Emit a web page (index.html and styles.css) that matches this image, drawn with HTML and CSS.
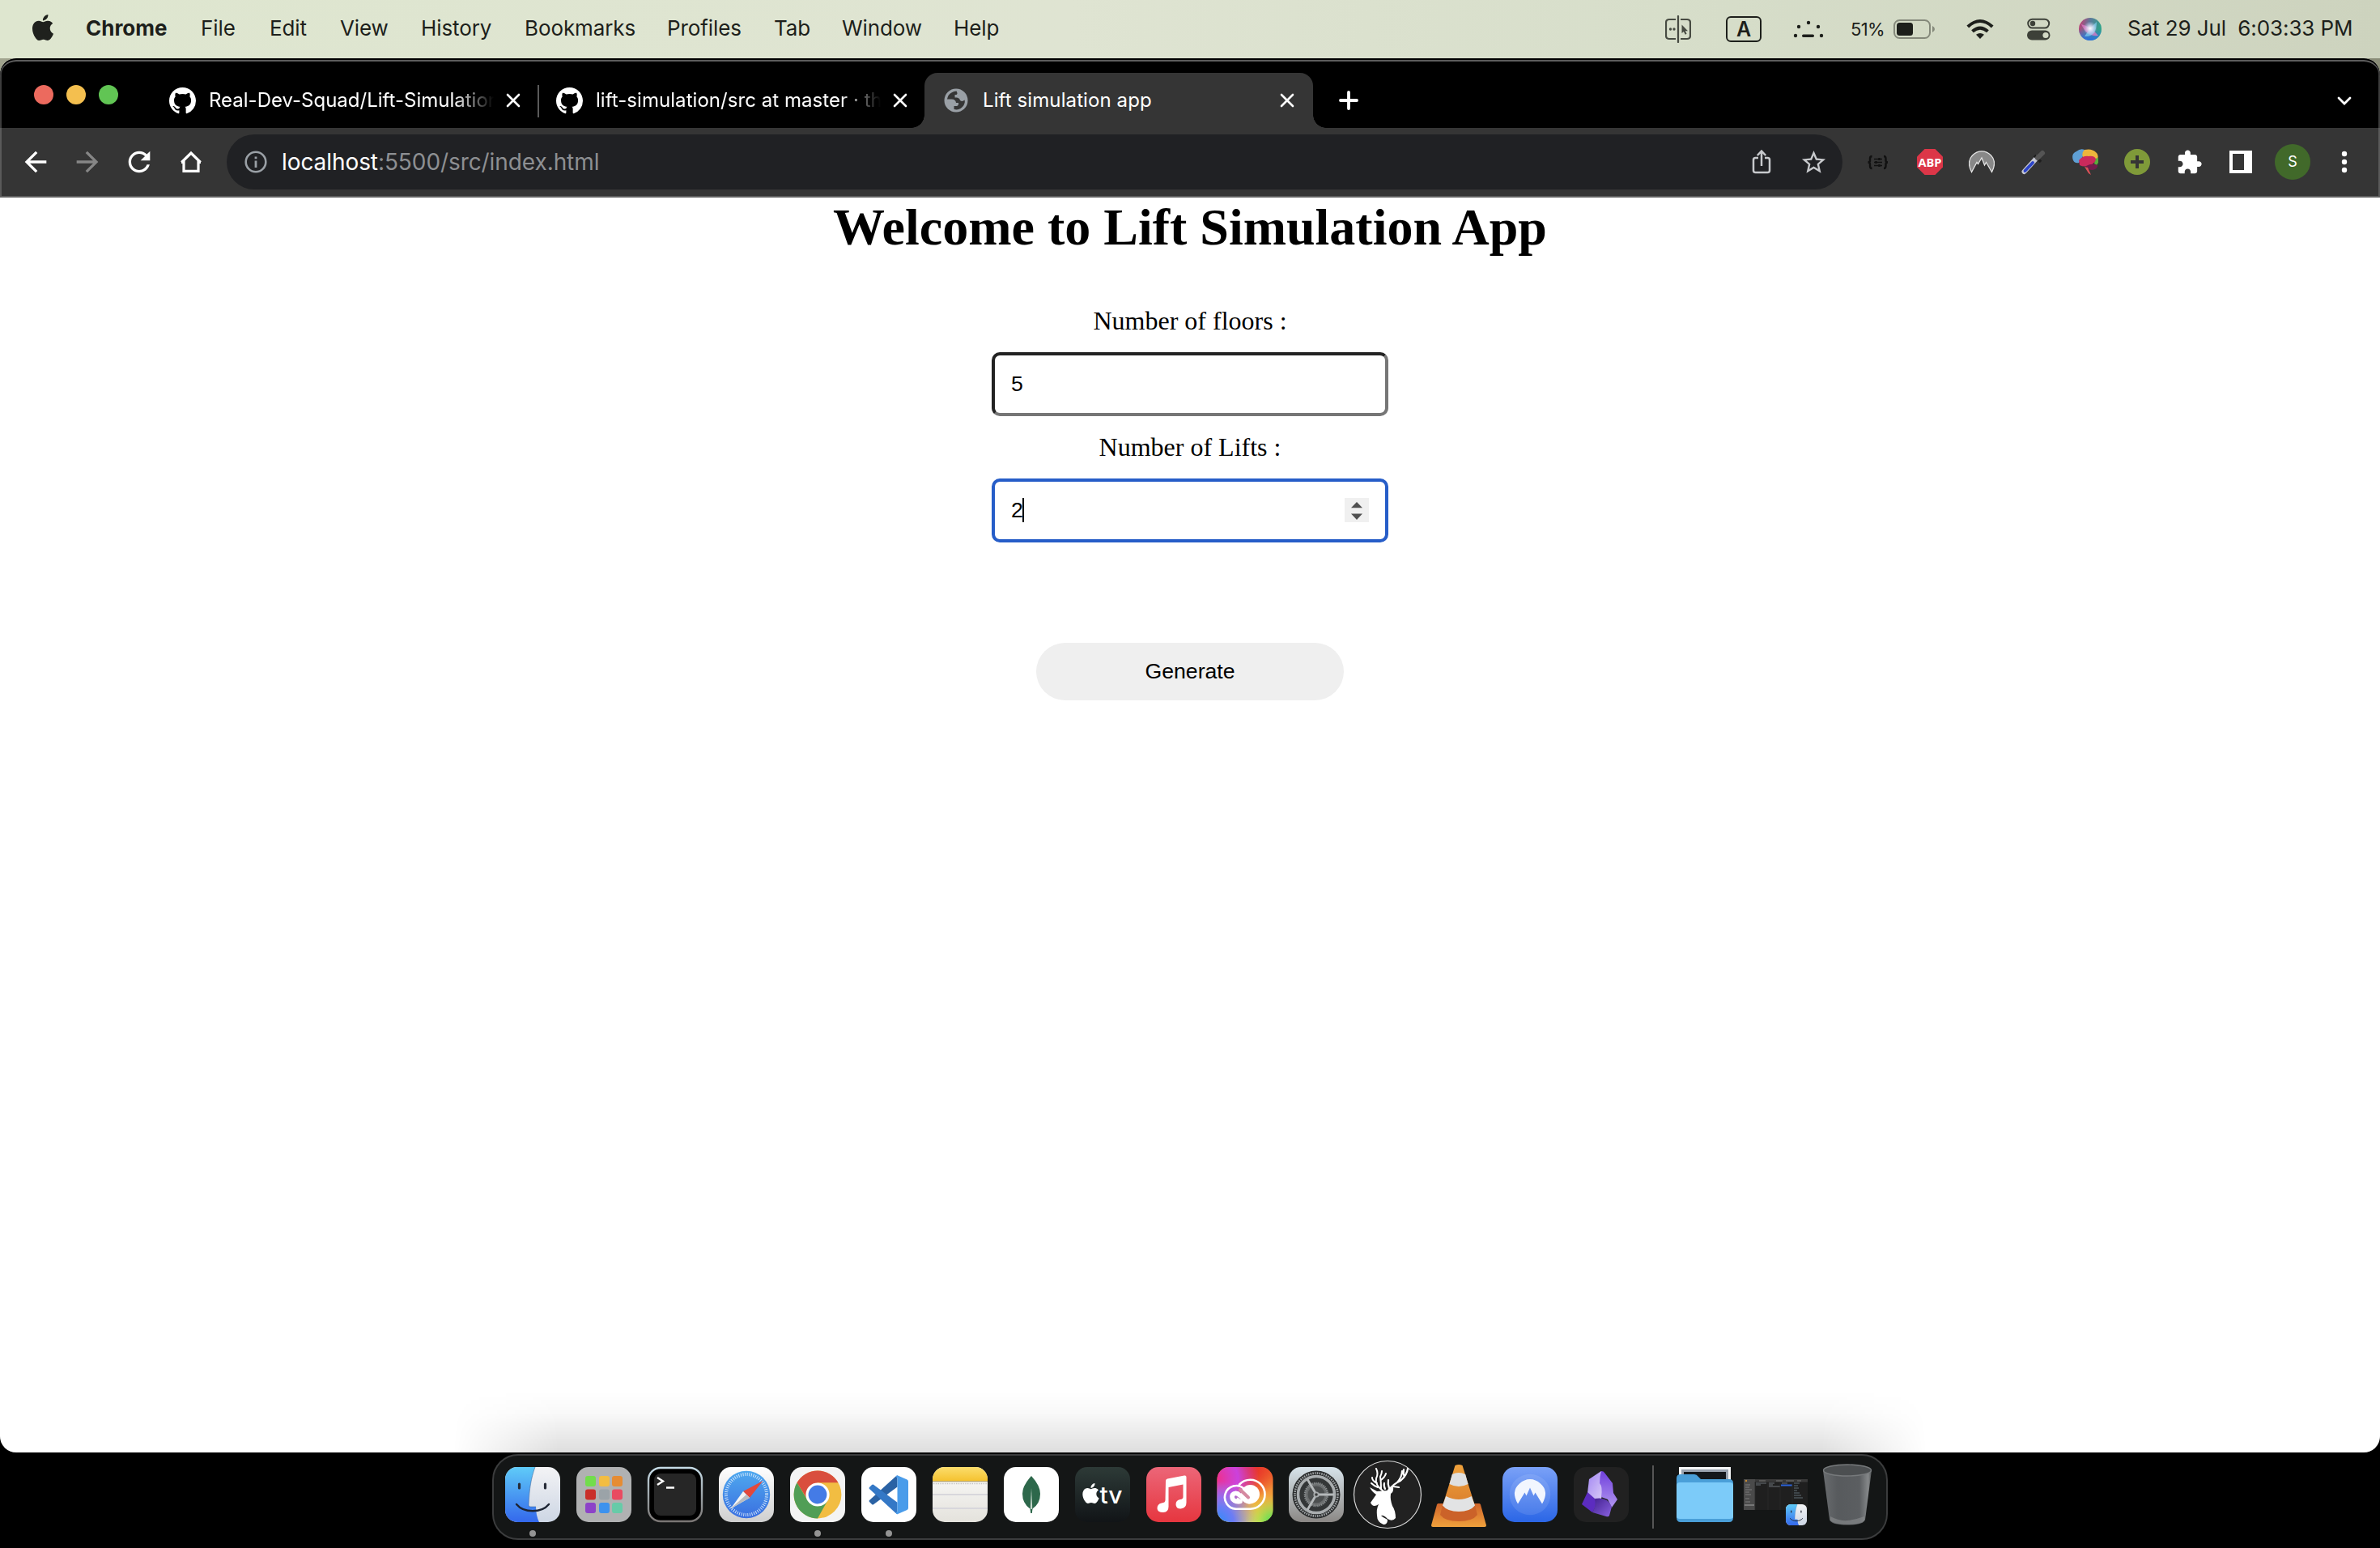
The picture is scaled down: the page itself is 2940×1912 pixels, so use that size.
FILE: index.html
```html
<!DOCTYPE html>
<html lang="en">
<head>
<meta charset="utf-8">
<title>Lift simulation app</title>
<link rel="stylesheet" href="styles.css">
</head>
<body>
<svg class="defs" width="0" height="0" aria-hidden="true">
  <defs>
    <linearGradient id="gBlue" x1="0" y1="0" x2="0" y2="1"><stop offset="0" stop-color="#5fcbf8"/><stop offset="1" stop-color="#3468ec"/></linearGradient>
    <linearGradient id="gFace" x1="0" y1="0" x2="0" y2="1"><stop offset="0" stop-color="#f3f3f5"/><stop offset="1" stop-color="#cdd6e4"/></linearGradient>
    <linearGradient id="gSilver" x1="0" y1="0" x2="0" y2="1"><stop offset="0" stop-color="#fff"/><stop offset="1" stop-color="#cfcfcf"/></linearGradient>
    <linearGradient id="gSafari" x1="0" y1="0" x2="0" y2="1"><stop offset="0" stop-color="#4fa9ef"/><stop offset="1" stop-color="#3a6fe0"/></linearGradient>
    <linearGradient id="gTerm" x1="0" y1="0" x2="0" y2="1"><stop offset="0" stop-color="#c5dbe6"/><stop offset="1" stop-color="#7a7674"/></linearGradient>
    <linearGradient id="gNoteTop" x1="0" y1="0" x2="0" y2="1"><stop offset="0" stop-color="#fbdd6c"/><stop offset="1" stop-color="#f5c331"/></linearGradient>
    <linearGradient id="gNote" x1="0" y1="0" x2="0" y2="1"><stop offset="0" stop-color="#fbfbfa"/><stop offset="1" stop-color="#e4e2dc"/></linearGradient>
    <linearGradient id="gTv" x1="0" y1="0" x2="0" y2="1"><stop offset="0" stop-color="#2d3a37"/><stop offset="1" stop-color="#111417"/></linearGradient>
    <linearGradient id="gMusic" x1="0" y1="0" x2="0" y2="1"><stop offset="0" stop-color="#ec6678"/><stop offset="1" stop-color="#e6363f"/></linearGradient>
    <linearGradient id="gGear" x1="0" y1="0" x2="0" y2="1"><stop offset="0" stop-color="#d7e3ea"/><stop offset="1" stop-color="#8b8885"/></linearGradient>
    <linearGradient id="gNord" x1="0" y1="0" x2="0" y2="1"><stop offset="0" stop-color="#7aa1f7"/><stop offset="1" stop-color="#2b66e6"/></linearGradient>
    <linearGradient id="gCone" x1="0" y1="0" x2="0" y2="1"><stop offset="0" stop-color="#efa13b"/><stop offset="1" stop-color="#d77a2c"/></linearGradient>
    <linearGradient id="gBase" x1="0" y1="0" x2="0" y2="1"><stop offset="0" stop-color="#d0642a"/><stop offset="1" stop-color="#efa13c"/></linearGradient>
    <linearGradient id="gTrash" x1="0" y1="0" x2="1" y2="0"><stop offset="0" stop-color="#6d7073"/><stop offset=".3" stop-color="#5b5e61"/><stop offset=".75" stop-color="#5f6265"/><stop offset=".93" stop-color="#8b8e90"/><stop offset="1" stop-color="#55585a"/></linearGradient>
    <linearGradient id="gObs1" x1="0" y1="0" x2="1" y2="1"><stop offset="0" stop-color="#a184f2"/><stop offset="1" stop-color="#dccff8"/></linearGradient>
    <linearGradient id="gObs2" x1="0" y1="0" x2="0" y2="1"><stop offset="0" stop-color="#7040dc"/><stop offset="1" stop-color="#b196f0"/></linearGradient>
    <linearGradient id="gObs3" x1="0" y1="0" x2="1" y2="1"><stop offset="0" stop-color="#42208f"/><stop offset="1" stop-color="#8a62e0"/></linearGradient>
    <radialGradient id="gCcR" cx=".5" cy="0" r=".62"><stop offset="0" stop-color="#e62c20"/><stop offset=".35" stop-color="#e8362a"/><stop offset="1" stop-color="#e8362a" stop-opacity="0"/></radialGradient>
    <radialGradient id="gCcM" cx="0" cy=".2" r=".75"><stop offset="0" stop-color="#ee2f8c"/><stop offset=".5" stop-color="#c843f0" stop-opacity=".9"/><stop offset="1" stop-color="#c843f0" stop-opacity="0"/></radialGradient>
    <radialGradient id="gCcB" cx="0" cy="1" r=".75"><stop offset="0" stop-color="#2f8cf8"/><stop offset=".4" stop-color="#6d7cf5"/><stop offset="1" stop-color="#8b7cf5" stop-opacity="0"/></radialGradient>
    <radialGradient id="gCcG" cx="1" cy="1" r=".5"><stop offset="0" stop-color="#3ade58"/><stop offset="1" stop-color="#b8e050" stop-opacity="0"/></radialGradient>
    <linearGradient id="gCcY" x1="0" y1="0" x2="0" y2="1"><stop offset="0" stop-color="#ee5a28"/><stop offset="1" stop-color="#f6e04c"/></linearGradient>
    <radialGradient id="gSiri" cx=".5" cy=".5" r=".5"><stop offset="0" stop-color="#fff"/><stop offset=".4" stop-color="#e6e4f6" stop-opacity=".75"/><stop offset="1" stop-color="#cce" stop-opacity="0"/></radialGradient>
    <linearGradient id="gSiriRing" x1="0" y1="0" x2="1" y2=".3"><stop offset="0" stop-color="#d6336c"/><stop offset=".5" stop-color="#5a7a9a"/><stop offset="1" stop-color="#2fa38a"/></linearGradient>
    <linearGradient id="gSiriBlue" x1="0" y1="0" x2="0" y2="1"><stop offset=".5" stop-color="#2a7ae0" stop-opacity="0"/><stop offset="1" stop-color="#2a6fe0"/></linearGradient>
    <symbol id="apple" viewBox="0 0 24 24"><path d="M12.152 6.896c-.948 0-2.415-1.078-3.96-1.04-2.04.027-3.91 1.183-4.961 3.014-2.117 3.675-.546 9.103 1.519 12.09 1.013 1.454 2.208 3.09 3.792 3.039 1.52-.065 2.09-.987 3.935-.987 1.831 0 2.35.987 3.96.948 1.637-.026 2.676-1.48 3.676-2.948 1.156-1.688 1.636-3.325 1.662-3.415-.039-.013-3.182-1.221-3.22-4.857-.026-3.04 2.48-4.494 2.597-4.559-1.429-2.09-3.623-2.324-4.39-2.376-2-.156-3.675 1.09-4.61 1.09zM15.53 3.83c.843-1.012 1.4-2.427 1.245-3.83-1.207.052-2.662.805-3.532 1.818-.78.896-1.454 2.338-1.273 3.714 1.338.104 2.715-.688 3.559-1.701"/></symbol>
    <symbol id="github" viewBox="0 0 16 16"><path d="M8 0C3.58 0 0 3.58 0 8c0 3.54 2.29 6.53 5.47 7.59.4.07.55-.17.55-.38 0-.19-.01-.82-.01-1.49-2.01.37-2.53-.49-2.69-.94-.09-.23-.48-.94-.82-1.13-.28-.15-.68-.52-.01-.53.63-.01 1.08.58 1.23.82.72 1.21 1.87.87 2.33.66.07-.52.28-.87.51-1.07-1.78-.2-3.64-.89-3.64-3.95 0-.87.31-1.59.82-2.15-.08-.2-.36-1.02.08-2.12 0 0 .67-.21 2.2.82.64-.18 1.32-.27 2-.27s1.36.09 2 .27c1.53-1.04 2.2-.82 2.2-.82.44 1.1.16 1.92.08 2.12.51.56.82 1.27.82 2.15 0 3.07-1.87 3.75-3.65 3.95.29.25.54.73.54 1.48 0 1.07-.01 1.93-.01 2.2 0 .21.15.46.55.38A8.01 8.01 0 0 0 16 8c0-4.42-3.58-8-8-8z"/></symbol>
    <symbol id="close" viewBox="0 0 18 18"><path d="M2 2l14 14M16 2L2 16" stroke="#fff" stroke-width="2.6" stroke-linecap="round"/></symbol>
    <symbol id="finder" viewBox="-34 -34 68 68">
      <rect x="-34" y="-34" width="68" height="68" rx="15" fill="url(#gFace)"/>
      <path d="M3-34C-2-20-4-8-5 13Q-5 15-3 15H4Q4 26 8 34H-19A15 15 0 0 1-34 19V-19A15 15 0 0 1-19-34Z" fill="url(#gBlue)"/>
      <path d="M-16.500-13v5M15.500-13v5" stroke="#262b38" stroke-width="3.200" stroke-linecap="round"/>
      <path d="M3-34C-2-20-4-8-5 13Q-5 15-3 15H4" fill="none" stroke="#2a4f86" stroke-opacity=".45" stroke-width="1"/>
      <path d="M-20 12C-11 23 11 23 20 12" fill="none" stroke="#1d2433" stroke-width="2.400" stroke-linecap="round"/>
    </symbol>
  </defs>
</svg>

<header class="menubar">
  <nav class="menus">
    <svg class="apple-logo" width="32" height="32" fill="#1f211d"><use href="#apple"/></svg>
    <span class="app-name">Chrome</span><span>File</span><span>Edit</span><span>View</span><span>History</span><span>Bookmarks</span><span>Profiles</span><span>Tab</span><span>Window</span><span>Help</span>
  </nav>
  <div class="status">
    <svg width="32" height="34" viewBox="0 0 32 34" fill="none" stroke="#474b42" stroke-width="2.2"><path d="M13 5H5Q1 5 1 9V25Q1 29 5 29H13M19 5H27Q31 5 31 9V25Q31 29 27 29H19"/><path d="M16 1V33" stroke-linecap="round"/><circle cx="6.500" cy="17" r="1.700" fill="#474b42" stroke="none"/><circle cx="11" cy="17" r="1.700" fill="#474b42" stroke="none"/><path d="M20.500 11.500v10.500l2.400-2 1.900 3.700 1.800-.9-1.800-3.500h3.200z" fill="#474b42" stroke="none"/></svg>
    <span class="input-source">A</span>
    <svg width="38" height="24" viewBox="0 0 38 24" fill="#1d1f1b"><circle cx="19" cy="4" r="2.200"/><circle cx="7" cy="9" r="2.200"/><circle cx="31" cy="9" r="2.200"/><circle cx="3" cy="20" r="2.200"/><circle cx="35" cy="20" r="2.200"/><rect x="11" y="18.500" width="15" height="3.400" rx="1.700"/></svg>
    <span class="percent">51%</span>
    <svg width="52" height="24" viewBox="0 0 52 24"><rect x="1" y="1" width="44" height="22" rx="6.500" fill="none" stroke="#85897b" stroke-width="2"/><rect x="4" y="4" width="20" height="16" rx="3.500" fill="#1d1f1b"/><path d="M48 8Q51 9.500 51 12T48 16Z" fill="#85897b"/></svg>
    <svg width="34" height="26" viewBox="0 0 34 26" fill="none" stroke="#1d1f1b" stroke-width="4"><path d="M1.800 10Q17-4 32.200 10"/><path d="M7.500 15.800Q17 7.500 26.500 15.800"/><path d="M17 25l-5-5.200Q17 16 22 19.800Z" fill="#1d1f1b" stroke="none"/></svg>
    <svg width="29" height="28" viewBox="0 0 29 28"><rect x="1.200" y="1.700" width="26" height="10.800" rx="5.400" fill="none" stroke="#3d4038" stroke-width="2"/><circle cx="7" cy="7" r="3.200" fill="#3d4038"/><rect x="0" y="15.500" width="28.500" height="12" rx="6" fill="#3d4038"/><circle cx="23" cy="21.500" r="3.600" fill="#d4dac6"/></svg>
    <svg width="28" height="28" viewBox="0 0 28 28"><circle cx="14" cy="14" r="14" fill="url(#gSiriRing)"/><circle cx="14" cy="14" r="14" fill="url(#gSiriBlue)"/><path d="M3 8Q14 10 24 22Q10 24 3 8Z" fill="#e478c8" opacity=".75"/><path d="M22 5Q14 12 7 23Q22 24 22 5Z" fill="#7fd0f4" opacity=".7"/><circle cx="14" cy="13" r="8.500" fill="url(#gSiri)"/></svg>
    <span class="clock">Sat 29 Jul&nbsp; 6:03:33 PM</span>
  </div>
</header>

<main class="window">
  <div class="tabstrip">
    <div class="lights"><i class="red"></i><i class="yellow"></i><i class="green"></i></div>
    <div class="tab">
      <svg class="favicon" width="33" height="33" fill="#fff"><use href="#github"/></svg>
      <span class="title fade t1">Real-Dev-Squad/Lift-Simulation</span>
      <svg width="18" height="18"><use href="#close"/></svg>
    </div>
    <div class="tab second">
      <svg class="favicon" width="33" height="33" fill="#fff"><use href="#github"/></svg>
      <span class="title fade t2">lift-simulation/src at master · the</span>
      <svg width="18" height="18"><use href="#close"/></svg>
    </div>
    <div class="tab active">
      <svg class="favicon" width="30" height="30" viewBox="0 0 30 30"><circle cx="15" cy="15" r="14.500" fill="#9aa0a6"/><path d="M15.500 3.500Q9 4 5.500 9Q4.500 11 4 13.500H9.500Q14.500 13.500 15 18H18Q18.500 21 16 22H12.500V26Q20 28 24.500 21Q26.500 17 25.500 14.500Q23 17 20 15Q19.500 12 16 11.500H13.500V8H15.500Q17.500 7 15.500 3.500Z" fill="#353535"/></svg>
      <span class="title t3">Lift simulation app</span>
      <svg width="18" height="18"><use href="#close"/></svg>
    </div>
    <svg class="newtab" width="24" height="24" viewBox="0 0 24 24"><path d="M12 2V22M2 12H22" stroke="#fff" stroke-width="3.800" stroke-linecap="round"/></svg>
    <svg class="tabsearch" width="20" height="14" viewBox="0 0 20 14"><path d="M3 3l7 7 7-7" fill="none" stroke="#fff" stroke-width="2.800" stroke-linecap="round"/></svg>
  </div>

  <div class="toolbar">
    <div class="cells">
      <svg width="40" height="40" viewBox="0 0 24 24" fill="#fff"><path d="M20 11H7.830l5.590-5.590L12 4l-8 8 8 8 1.410-1.410L7.830 13H20v-2z"/></svg>
      <svg width="40" height="40" viewBox="0 0 24 24" fill="#868686"><path d="M4 11h12.170l-5.590-5.590L12 4l8 8-8 8-1.410-1.410L16.170 13H4v-2z"/></svg>
      <svg width="40" height="40" viewBox="0 0 24 24" fill="#fff"><path d="M17.650 6.350C16.200 4.900 14.210 4 12 4c-4.420 0-7.990 3.580-7.990 8s3.570 8 7.990 8c3.730 0 6.840-2.550 7.730-6h-2.080c-.82 2.330-3.040 4-5.650 4-3.310 0-6-2.690-6-6s2.690-6 6-6c1.660 0 3.140.69 4.220 1.780L13 11h7V4l-2.350 2.350z"/></svg>
      <svg width="40" height="40" viewBox="0 0 40 40" fill="none" stroke="#fff" stroke-width="3.200"><path d="M8.300 20.500L20 9l11.700 11.500M11 18.500V31.400H29V18.500M8 20.400H12M28 20.400H32"/></svg>
    </div>
    <div class="omnibox">
      <svg width="28" height="28" viewBox="0 0 28 28" fill="none" stroke="#9aa0a6"><circle cx="14" cy="14" r="12.300" stroke-width="2.600"/><path d="M14 12.500V21M14 7.500V10.300" stroke-width="2.800"/></svg>
      <span class="url"><b>localhost</b><span class="path">:5500/src/index.html</span></span>
      <svg width="24" height="32" viewBox="0 0 24 32" fill="none" stroke="#c7c9cc" stroke-width="2.500"><path d="M8 11H4.500Q2 11 2 13.500V26.500Q2 29 4.500 29H19.500Q22 29 22 26.500V13.500Q22 11 19.500 11H16"/><path d="M12 21V3M6.800 8L12 2.600 17.200 8"/></svg>
      <svg class="star" width="35" height="35" viewBox="0 0 24 24" fill="#c7c9cc"><path d="M22 9.240l-7.190-.62L12 2 9.190 8.630 2 9.240l5.460 4.730L5.820 21 12 17.270 18.180 21l-1.630-7.030L22 9.240zM12 15.400l-3.760 2.270 1-4.280-3.320-2.880 4.380-.38L12 6.100l1.710 4.040 4.380.38-3.320 2.880 1 4.280L12 15.400z"/></svg>
    </div>
    <div class="cells">
      <svg width="32" height="32" viewBox="0 0 32 32" fill="none" stroke="#111" stroke-width="2.400"><path d="M8.500 9Q6 9 6 12V14.500Q6 16.500 3.500 16.500Q6 16.500 6 18.500V21Q6 24 8.500 24M23 9Q25.500 9 25.500 12V14.500Q25.500 16.500 28 16.500Q25.500 16.500 25.500 18.500V21Q25.500 24 23 24"/><path d="M11 12.500H21M11 16.500H21M11 20.500H21" stroke-width="1.500"/><path d="M17.500 11v3M13.500 15v3M17.500 19v3"/></svg>
      <svg width="32" height="32" viewBox="0 0 32 32"><path d="M9.500 0h13L32 9.500v13L22.500 32h-13L0 22.500v-13z" fill="#dc3648"/><text x="16" y="21.800" text-anchor="middle" textLength="29" lengthAdjust="spacingAndGlyphs" class="abp">ABP</text></svg>
      <svg width="32" height="32" viewBox="0 0 32 32"><path d="M3.500 28.500Q-3 16 4.500 8Q9.500 2.800 16 2.800T27.500 8Q35 16 28.500 28.500L21.500 16.500 19.500 20 16 11 11.500 18.500 10 16.500Z" fill="#888" stroke="#e4e4e4" stroke-width="1.300"/></svg>
      <svg width="32" height="32" viewBox="0 0 32 32"><path d="M4.500 28L20 11" stroke="#c4c6d2" stroke-width="6" stroke-linecap="round"/><path d="M5.500 27L15 17" stroke="#2b43c8" stroke-width="3.800" stroke-linecap="round"/><path d="M17 8l8 8" stroke="#1e1e1e" stroke-width="3.500"/><path d="M21 11l6-6" stroke="#555" stroke-width="6" stroke-linecap="round"/></svg>
      <svg width="32" height="32" viewBox="0 0 32 32"><path d="M1 14Q-2 6 5 3Q10-1 15 1L13 9 8 17Q3 18 1 14Z" fill="#5f9fd4"/><path d="M15 1Q24-1 29 4Q33 7 31 12L27 14 13 10Q11 5 15 1Z" fill="#edb53c"/><path d="M28 12L32 11Q33 17 30 20L27 18Z" fill="#5aab3c"/><path d="M8 14Q13 8 20 9Q28 8 29 13Q27 19 21 20Q15 23 9 20Z" fill="#cb2a5c"/><path d="M17 21Q24 17 31 20Q32 24 25 26Q18 26 17 21Z" fill="#741a4c"/><path d="M15 22L19 23 23 32 20 30Z" fill="#dc5058"/></svg>
      <svg width="32" height="32" viewBox="0 0 32 32"><circle cx="16" cy="16" r="16" fill="#7f9a39"/><path d="M16 8V24M8 16H24" stroke="#353535" stroke-width="4"/></svg>
      <svg width="33" height="33" viewBox="0 0 24 24" fill="#fff"><path d="M20.500 11H19V7c0-1.100-.9-2-2-2h-4V3.500C13 2.120 11.880 1 10.500 1S8 2.120 8 3.500V5H4c-1.100 0-1.990.9-1.990 2v3.800H3.500c1.490 0 2.700 1.210 2.700 2.700s-1.210 2.700-2.700 2.700H2V20c0 1.100.9 2 2 2h3.800v-1.500c0-1.490 1.210-2.700 2.700-2.700 1.490 0 2.700 1.210 2.700 2.700V22H17c1.100 0 2-.9 2-2v-4h1.500c1.380 0 2.500-1.120 2.500-2.500S21.880 11 20.500 11z"/></svg>
      <svg width="28" height="28" viewBox="0 0 28 28"><path d="M0 0H28V28H0ZM4 4V24H18V4Z" fill="#fff" fill-rule="evenodd"/></svg>
      <span class="avatar">S</span>
      <svg width="8" height="28" viewBox="0 0 8 28" fill="#fff"><circle cx="4" cy="4" r="3.200"/><circle cx="4" cy="14" r="3.200"/><circle cx="4" cy="24" r="3.200"/></svg>
    </div>
  </div>

  <section class="page">
    <h1>Welcome to Lift Simulation App</h1>
    <label class="label">Number of floors :</label>
    <div class="field">5</div>
    <label class="label">Number of Lifts :</label>
    <div class="field focused"><span class="value">2</span><span class="caret"></span>
      <svg class="spinner" width="30" height="30" viewBox="0 0 30 30"><rect width="30" height="30" fill="#f0f0f0"/><path d="M8 12.200L15 5 22 12.200ZM8 19.500H22L15 27Z" fill="#505050"/></svg>
    </div>
    <button class="generate">Generate</button>
  </section>
</main>

<footer class="dock">
  <div class="app"><svg viewBox="-44 -44 88 88"><use href="#finder" x="-34" y="-34" width="68" height="68"/></svg><i class="dot"></i></div>
  <div class="app"><svg viewBox="-44 -44 88 88"><rect x="-34" y="-34" width="68" height="68" rx="15" fill="#b0b1b2"/>
    <g><rect x="-23" y="-23" width="13" height="13" rx="3" fill="#72dd4c"/><rect x="-6" y="-23" width="13" height="13" rx="3" fill="#f3bd42"/><rect x="10" y="-23" width="13" height="13" rx="3" fill="#e68c34"/><rect x="-23" y="-6.500" width="13" height="13" rx="3" fill="#c9302a"/><rect x="-6" y="-6.500" width="13" height="13" rx="3" fill="#9ba3a8"/><rect x="10" y="-6.500" width="13" height="13" rx="3" fill="#e94b61"/><rect x="-23" y="10" width="13" height="13" rx="3" fill="#8c42c8"/><rect x="-6" y="10" width="13" height="13" rx="3" fill="#3d92ee"/><rect x="10" y="10" width="13" height="13" rx="3" fill="#67cba8"/></g></svg></div>
  <div class="app"><svg viewBox="-44 -44 88 88"><rect x="-33" y="-33" width="66" height="66" rx="15" fill="#000" stroke="url(#gTerm)" stroke-width="2.400"/><rect x="-26" y="-26" width="52" height="52" rx="8" fill="#262626"/><path d="M-22-21l7 4.500-7 4.500M-11-8.500h10" fill="none" stroke="#fff" stroke-width="2.400"/></svg></div>
  <div class="app"><svg viewBox="-44 -44 88 88"><rect x="-34" y="-34" width="68" height="68" rx="15" fill="url(#gSilver)"/><circle r="29.200" fill="url(#gSafari)"/><circle r="25" fill="none" stroke="#d9eafb" stroke-width="4" stroke-dasharray=".9 1.718"/><path d="M20.500-17L4 4-4-4Z" fill="#e3483c"/><path d="M-19.500 17.500L-4-4 4 4Z" fill="#f4f4f4"/><path d="M-19.500 17.500L0 0 4 4Z" fill="#b9bcc0"/></svg></div>
  <div class="app"><svg viewBox="-44 -44 88 88"><rect x="-34" y="-34" width="68" height="68" rx="15" fill="#f4f4f4"/><circle r="29.400" fill="#f2bd42"/><path d="M-25.460-14.700A29.400 29.400 0 0 1 25.460-14.700H0L-12 7Z" fill="#d94f3d"/><path d="M-25.460-14.700A29.400 29.400 0 0 0 0 29.400L12.500 7H-12.500Z" fill="#519e56"/><circle r="14.600" fill="#fff"/><circle r="11.400" fill="#447be6"/></svg><i class="dot"></i></div>
  <div class="app"><svg viewBox="-44 -44 88 88"><rect x="-34" y="-34" width="68" height="68" rx="15" fill="#fff"/><path d="M10.500-23.700V-9.500L-19 12.300Q-20 13-21 12L-24 9Q-25 8-24 7L8-22Z" fill="#2a62a4"/><path d="M10.500 24.300V9.800L-19-12.300Q-20-13-21-12L-24-9Q-25-8-24-7L8 22.600Z" fill="#3478c6"/><path d="M10.500-23.700L22.500-18.500Q24-17.700 24-16V16.500Q24 18.200 22.500 19L10.500 24.300Q9 24 8.500 22.500L10.500 21V-20.500L8.500-22Q9-23.500 10.500-23.700Z" fill="#4a9cea"/></svg><i class="dot"></i></div>
  <div class="app"><svg viewBox="-44 -44 88 88"><rect x="-34" y="-34" width="68" height="68" rx="15" fill="url(#gNote)"/><path d="M-34-17V-19A15 15 0 0 1-19-34H19A15 15 0 0 1 34-19V-17Z" fill="url(#gNoteTop)"/><path d="M-34-16.300H34" stroke="#b9a56a" stroke-width="1.200"/><path d="M-33-13.500H34" stroke="#c4c4c4" stroke-width="1.600" stroke-dasharray="1.400 1.400"/><path d="M-34 0H34M-34 17H34" stroke="#d8d7dc" stroke-width="1.800"/></svg></div>
  <div class="app"><svg viewBox="-44 -44 88 88"><rect x="-34" y="-34" width="68" height="68" rx="15" fill="#fff"/><path d="M0-23Q11-11 11-1Q11 11 1.500 17.500L.8 23H-.8L-1.500 17.500Q-11 11-11-1Q-11-11 0-23Z" fill="#2d684b"/><path d="M0-8L1.200 16 .8 18H-.8L-1.200 16Z" fill="#c5d6cb"/></svg></div>
  <div class="app"><svg viewBox="-44 -44 88 88"><rect x="-34" y="-34" width="68" height="68" rx="15" fill="url(#gTv)"/><use href="#apple" x="-27" y="-14" width="25" height="25" fill="#fff"/><text x="-3.500" y="10.500" class="tv" textLength="28" lengthAdjust="spacingAndGlyphs">tv</text></svg></div>
  <div class="app"><svg viewBox="-44 -44 88 88"><rect x="-34" y="-34" width="68" height="68" rx="15" fill="url(#gMusic)"/><path d="M-10-17Q-10-19-8-19.500L13-23.500Q15.500-24 15.500-21.500V10Q15.500 17 8.500 17.500Q2.500 17.500 2.500 12Q2.500 7 8 6Q11.500 5.500 11.500 3V-12.500L-6.500-9V15Q-6.500 21.500-13 22Q-20.500 22-20.500 17Q-20.500 11.500-15 10.500Q-10.500 10-10.500 7Z" fill="#fff"/></svg></div>
  <div class="app"><svg viewBox="-44 -44 88 88"><rect x="-34.500" y="-34" width="69" height="68" rx="15" fill="url(#gCcY)"/><rect x="-34.500" y="-34" width="69" height="68" rx="15" fill="url(#gCcR)"/><rect x="-34.500" y="-34" width="69" height="68" rx="15" fill="url(#gCcM)"/><rect x="-34.500" y="-34" width="69" height="68" rx="15" fill="url(#gCcB)"/><rect x="-34.500" y="-34" width="69" height="68" rx="15" fill="url(#gCcG)"/><circle cx="6.500" cy="-.5" r="11.500" fill="#fff"/><path d="M-6 8.500Q-12 9.500-15 6Q-17.500 1-13.500-1.200Q-10-2.500-6.500 1L1 7.500Q4 9.500 7 8.500" fill="none" stroke="#fff" stroke-width="5.600" stroke-linecap="round"/><path d="M-11 6L-7 9" stroke="#fff" stroke-width="6"/><path d="M-6-6L4 3.500" stroke="#d58aa0" stroke-width="4" stroke-linecap="round"/><path d="M-7-12.500Q-1.500-18.300 6.500-18.300A18 18 0 0 1 6.500 17.700H-10.500A14.300 14.300 0 1 1-1.500-7.500" fill="none" stroke="#fff" stroke-width="2.600" stroke-linecap="round"/></svg></div>
  <div class="app"><svg viewBox="-44 -44 88 88"><rect x="-34" y="-34" width="68" height="68" rx="15" fill="url(#gGear)"/><circle r="29.500" fill="#2b2d2e"/><circle r="26.500" fill="none" stroke="#a3a7a9" stroke-width="2.600" stroke-dasharray="1.500 1.275"/><circle r="22.500" fill="#333637" stroke="#a9adaf" stroke-width="3.600"/><circle r="14" fill="#6a6d6e" stroke="#85898b" stroke-width="2.600" stroke-dasharray="1.400 1"/><circle r="10.500" fill="#4c4f50"/><path d="M0 0H22M0 0L-11-19M0 0L-11 19" stroke="#b5b9bb" stroke-width="2.800"/><circle r="3.600" fill="#a7abad"/><circle r="1.800" fill="#3a3c3d"/></svg></div>
  <div class="app"><svg viewBox="-44 -44 88 88"><circle r="41.500" fill="#212121" stroke="#d8d8d8" stroke-width="1.200"/><g fill="none" stroke="#fff" stroke-linecap="round"><path d="M-5-4Q-16-12-14-20Q-11-26-14-32M-8-7Q-8-16-9-22Q-7-26-7-29M-13-14Q-19-17-19-21M-12-9Q-17-11-20-14M-8-18Q-3-22-2-26" stroke-width="2"/><path d="M0-4Q8-14 16-17Q24-24 25-32M12-15Q18-22 18-29M21-22Q19-26 20-31M2-8Q0-13 1-18M-3-7Q-5-11-4-14M7-10L14-9" stroke-width="2.200"/></g><path d="M-22-9L-13-4 0-5Q2-9 7-9Q8-4 4-1Q3 6 6 14Q10 20 10 29Q6 34 0 30Q-5 25-8 26Q-6 28 0 31Q0 37-5 37Q-13 34-13 26Q-14 18-11 12Q-18 17-21 10L-14 0Q-19-3-22-9Z" fill="#fff"/></svg></div>
  <div class="app"><svg viewBox="-44 -44 88 88"><path d="M-25.500 11H25.500Q26.500 11 27 12.500L34 38Q34 40 32 40H-32Q-34 40-34 38L-27 12.500Q-26.500 11-25.500 11Z" fill="url(#gBase)"/><path d="M-20 13H20L23 25Q17 33 0 33T-23 25Z" fill="#cb6229"/><path d="M-4.500-36Q0-38 4.500-36L20 13.500Q14 21 0 21T-20 13.500Z" fill="url(#gCone)"/><path d="M-8.200-25Q0-29 8.200-25L11.500-13Q6-10 0-10T-11.500-13Z" fill="#dfe0e1"/><path d="M-15.800 2Q-8 6 0 6T15.800 2L20 13.500Q14 21 0 21T-20 13.500Z" fill="#e2e3e4"/></svg></div>
  <div class="app"><svg viewBox="-44 -44 88 88"><rect x="-34" y="-34" width="68" height="68" rx="15" fill="url(#gNord)"/><circle r="25.300" fill="#fff" fill-opacity=".1"/><path d="M-15 11.500Q-24-4-13-13.500Q-7-19 0-19T13-13.500Q24-4 15 11.500L6.500-2.500 4.500 1.500 0-8.500-4.500 1.500-6.500-2.500Z" fill="#f2f6fe"/></svg></div>
  <div class="app"><svg viewBox="-44 -44 88 88"><rect x="-34" y="-34" width="68" height="68" rx="15" fill="#212121"/><path d="M0-29L-15-19-17-2-8 7 0 5Q6-12 0-29Z" fill="url(#gObs1)"/><path d="M0-29Q3-29 4-27L14-14 15-2 20 6 13 16 8 6 0 3Q2-10-2-14Q-2-22 0-29Z" fill="url(#gObs2)"/><path d="M-17-3L-24 12-11 22Q-4 12-8 5Z" fill="#5c2cc0"/><path d="M-8 5Q8 2 13 15L10 26Q9 28 6 27L-11 22Q-6 14-8 5Z" fill="url(#gObs3)"/></svg></div>
  <div class="divider"></div>
  <div class="app"><svg viewBox="-44 -44 88 88"><path d="M-32-34H32V0H-32Z" fill="#f4f5f6"/><path d="M-29-31H29V0H-29Z" fill="#9aa3af"/><path d="M-26-28H26V0H-26Z" fill="#14181c"/><path d="M-35-20Q-35-25-30-25H-13Q-10-25-8-22L-5-19H30Q35-19 35-14V28Q35 34 30 34H-30Q-35 34-35 28Z" fill="#4a9fd8"/><path d="M-35-11Q-35-15-31-15H31Q35-15 35-11V27Q35 30 31 30H-31Q-35 30-35 27Z" fill="#7ccbf9"/></svg></div>
  <div class="app"><svg viewBox="-44 -44 88 88"><path d="M-40-19H39V19H-40Z" fill="#1f1f1f"/><path d="M-40-19H-26V19H-40Z" fill="#4a4a4a"/><path d="M-26-19H39V-15.500H-26Z" fill="#3a3a3a"/><circle cx="-37" cy="-17" r="1.200" fill="#c58a35"/><g fill="none"><path d="M-38-12h6M-38-9h5M-38-6h8M-38-3h5M-38 0h7M-38 5h5M-38 9h6" stroke="#7d7d7d" stroke-width="1"/><path d="M-39 13H-27" stroke="#777" stroke-width="2"/><path d="M-25-14h13M-25-12h6M-9-14h7M-9-12h5M-9-10h14M7-14h7" stroke="#6c7378" stroke-width="1.200"/><path d="M6-11.500H20" stroke="#2c62d8" stroke-width="2"/><path d="M22-14h7M22-11h5M22-8h6M22-5h4M22-2h7M22 1h9M22 4h11" stroke="#5f6c75" stroke-width="1.200"/><path d="M-26-16V19M-10-16V19M5-16V19M20-16V19" stroke="#2b2b2b" stroke-width=".8"/><path d="M-21-17h8M0-17h8M12-17h10M26-17h5" stroke="#757575" stroke-width="1.200"/></g><use href="#finder" x="12" y="12" width="26" height="26"/></svg></div>
  <div class="app"><svg viewBox="-44 -44 88 88"><path d="M-30-30L-22 31Q-20 37.500 0 37.500T22 31L30-30Z" fill="url(#gTrash)" fill-opacity=".95"/><path d="M-21 27Q-10 33 0 32T21 27L21 32Q16 37 0 37T-21 32Z" fill="#8f9294" fill-opacity=".55"/><ellipse cy="-30" rx="29.500" ry="7" fill="#4c4f51" stroke="#777a7c" stroke-width="1.400"/></svg></div>
</footer>
</body>
</html>
```
FILE: styles.css
```css
* { box-sizing: border-box; }
body {
  margin: 0;
  width: 2940px;
  height: 1912px;
  overflow: hidden;
  background: linear-gradient(90deg, #a2a58f, #8a8d78) 0 0 / 100% 200px no-repeat #000;
  font-family: Inter, "Liberation Sans", sans-serif;
}
svg { display: block; flex: none; }
.defs { position: absolute; }

/* Menu bar */
.menubar {
  height: 72px;
  display: flex;
  justify-content: space-between;
  background: linear-gradient(90deg, #dee6cf 0%, #dfe4d2 45%, #d7deca 70%, #cdd3be 100%);
  color: #1d1f1b;
  font-size: 26px;
  line-height: 70px;
  white-space: pre;
}
.menus {
  display: grid;
  grid-template-columns: 69px 142px 85px 87px 100px 128px 176px 132px 84px 138px 80px;
  padding-left: 37px;
  letter-spacing: -0.1px;
}
.apple-logo { margin-top: 18px; }
.app-name { font-weight: 700; letter-spacing: 0; }
.status {
  display: grid;
  grid-template-columns: 75px 83px 72px 52px 90px 75px 64px 60px 312px;
  align-items: center;
}
.input-source {
  width: 44px;
  height: 32px;
  border: 2px solid #1d1f1b;
  border-radius: 6px;
  font-size: 25px;
  font-weight: 600;
  line-height: 29px;
  text-align: center;
}
.percent { font-size: 22px; letter-spacing: -0.6px; margin-left: -1px; }
.clock { letter-spacing: -0.1px; padding-bottom: 2px; }

/* Browser window */
.window {
  height: 1722px;
  border-radius: 20px;
  overflow: hidden;
  background: #fff;
  display: flex;
  flex-direction: column;
}
.tabstrip {
  height: 86px;
  background: #000;
  display: flex;
  align-items: flex-end;
  border-radius: 20px 20px 0 0;
  box-shadow: inset 0 2px #000, inset 0 4px #5c5c5c, inset 2px 0 #3c3c3c, inset -2px 0 #3c3c3c;
}
.lights { display: flex; gap: 16px; padding-left: 42px; width: 194px; height: 53px; }
.lights i { width: 24px; height: 24px; border-radius: 50%; }
.red { background: #ec6a5e; }
.yellow { background: #f4bf4f; }
.green { background: #61c554; }
.tab {
  display: flex;
  align-items: center;
  height: 68px;
  width: 472px;
  padding: 0 0 0 15px;
  color: #fff;
  font-size: 24px;
  background: linear-gradient(#5a5a5a, #5a5a5a) right 15px / 2px 40px no-repeat;
}
.tab.second { width: 476px; background: none; padding-left: 21px; }
.favicon { margin-right: 16px; }
.title { width: 367px; white-space: nowrap; overflow: hidden; line-height: 34px; }
.t1, .t2 { width: 352px; margin-right: 15px; }
.t2 { letter-spacing: 0.05px; }
.t3 { margin-left: 2px; letter-spacing: 0.1px; }
.fade {
  mask-image: linear-gradient(90deg, #000 calc(100% - 50px), transparent);
}
.tab.active {
  position: relative;
  width: 480px;
  padding-left: 24px;
  border-radius: 16px 16px 0 0;
  background: #353535;
}
.active::before, .active::after {
  content: "";
  position: absolute;
  bottom: 0;
  width: 16px;
  height: 16px;
}
.active::before { left: -16px; background: radial-gradient(circle at 0 0, #000 15.5px, #353535 16px); }
.active::after { right: -16px; background: radial-gradient(circle at 100% 0, #000 15.5px, #353535 16px); }
.newtab { margin: 0 0 22px 32px; }
.tabsearch { margin: 0 34px 26px auto; }

.toolbar {
  height: 86px;
  display: flex;
  align-items: center;
  gap: 12px;
  padding: 0 12px;
  background: #353535;
  border-bottom: 2px solid #5f5f5f;
  box-shadow: inset 2px 0 #5a5a5a, inset -2px 0 #5a5a5a;
}
.cells { display: grid; grid-auto-flow: column; grid-auto-columns: 64px; place-items: center; }
.omnibox {
  flex: 1;
  height: 68px;
  border-radius: 34px;
  background: #202124;
  display: flex;
  align-items: center;
  padding: 0 18px 0 22px;
}
.url { flex: 1; margin-left: 18px; font-size: 28px; color: #9aa0a6; letter-spacing: -0.08px; }
.url b { color: #fff; font-weight: 400; }
.path { color: #8d8f92; }
.star { margin-left: 35px; }
.abp { font: 700 15px "Open Sans", sans-serif; fill: #fff; }
.avatar {
  width: 44px;
  height: 44px;
  border-radius: 50%;
  background: #41692a;
  color: #fff;
  font-size: 18px;
  line-height: 44px;
  text-align: center;
}

/* Page */
.page {
  flex: 1;
  display: flex;
  flex-direction: column;
  align-items: center;
  font-family: "Liberation Serif", serif;
  color: #000;
}
h1 { margin: 0; font-size: 64px; line-height: 74px; }
.label { margin-top: 60px; font-size: 32px; line-height: 37px; }
.field + .label { margin-top: 20px; }
.field {
  width: 490px;
  height: 79px;
  margin-top: 20px;
  border: 4px solid;
  border-color: #222 #767676 #767676 #222;
  border-radius: 10px;
  padding: 0 20px;
  display: flex;
  align-items: center;
  font: 26.67px "Liberation Sans", sans-serif;
}
.focused { border-color: #265dc8; }
.caret { width: 2px; height: 30px; margin: -1px 0 0 -1px; background: #000; }
.spinner { margin: -1px 0 0 auto; }
.generate {
  margin-top: 124px;
  width: 380px;
  height: 71px;
  border: 0;
  border-radius: 36px;
  background: #efefef;
  color: #000;
  font: 26.67px "Liberation Sans", sans-serif;
}

/* Dock */
.dock {
  position: relative;
  width: 1724px;
  height: 106px;
  margin: 2px auto 0;
  padding: 4px 4px 0;
  display: flex;
  border: 2px solid #3b3c3d;
  border-radius: 32px;
  background: #141616;
}
.dock::before {
  content: "";
  position: absolute;
  left: -50px;
  right: -50px;
  top: -80px;
  height: 76px;
  background: linear-gradient(transparent, rgba(0, 0, 0, .025) 35%, rgba(0, 0, 0, .13));
  mask-image: linear-gradient(90deg, transparent, #000 130px, #000 calc(100% - 130px), transparent);
}
.app { width: 88px; display: flex; flex-direction: column; align-items: center; }
.app svg { width: 88px; height: 88px; }
.dot { width: 8px; height: 8px; border-radius: 50%; background: #949494; }
.divider { width: 2px; height: 78px; margin: 8px 19px 0; background: #555; }
.tv { font: 500 29px Inter, sans-serif; fill: #fff; }
```
